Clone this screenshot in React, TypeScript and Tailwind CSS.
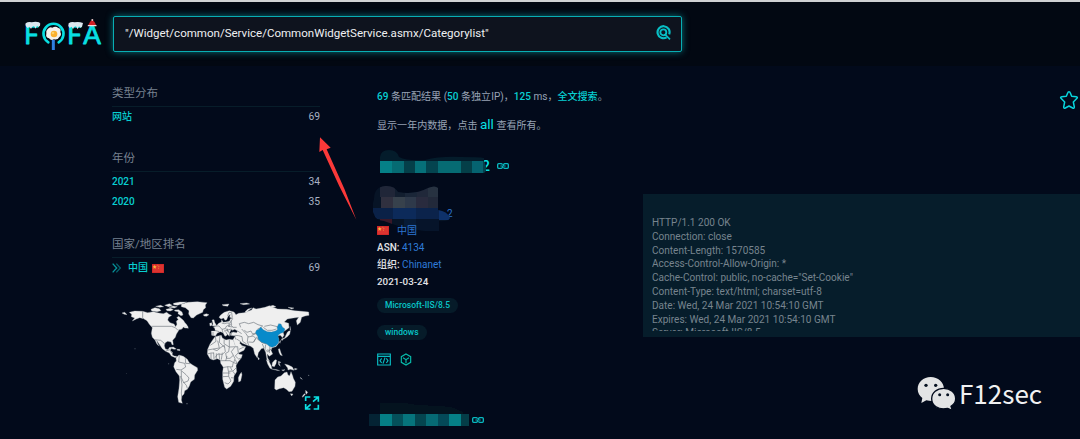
import React from "react";

const Flag = () => (
  <svg width="12" height="9" viewBox="0 0 36 27" className="shrink-0">
    <rect width="36" height="27" fill="#c81f22" />
    <rect x="1.5" y="1.5" width="33" height="24" fill="#dc3430" />
    <path d="M8 3l2 4h4l-3 3 1 4-4-2-4 2 1-4-3-3h4z" fill="#f7b63c" />
    <path d="M16 2h3v3h-3zM19 6h3v3h-3zM18 11h3v3h-3z" fill="#eb7b35" />
  </svg>
);

const LinkIcon = () => (
  <svg width="12" height="8" viewBox="0 0 36 24" fill="none" stroke="#08b9c0" strokeWidth="4" className="shrink-0">
    <path d="M16 8q0-3-3-3H5Q2 5 2 8v8q0 3 3 3h8q3 0 3-3l4-8q0-3 3-3h8q3 0 3 3v8q0 3-3 3h-8q-3 0-3-3" />
    <path d="M10 12h5M21 12h5" strokeWidth="3" />
  </svg>
);

const Logo = () => (
  <svg width="78" height="34" viewBox="72 54 234 102" className="shrink-0">
    <g fill="#08dfe2" stroke="#08dfe2" strokeWidth="2.5" strokeLinejoin="round" fontFamily="Lato, sans-serif" fontSize="83">
      <text x="72" y="131" textLength="45" lengthAdjust="spacingAndGlyphs">F</text>
      <text x="201" y="131" textLength="45" lengthAdjust="spacingAndGlyphs">F</text>
      <text x="250" y="131" textLength="53" lengthAdjust="spacingAndGlyphs">A</text>
    </g>
    <path d="M145 127a30 30 0 1 1 31 0" fill="none" stroke="#08dfe2" strokeWidth="8" strokeLinecap="round" />
    <path d="M160 120v30" stroke="#2f7fe0" strokeWidth="9" />
    <path d="M143 87q7-8 14-4q10-6 18 1q9 2 6 12q5 9-3 15q-5 10-16 7q-9 5-15-3q-11-3-8-14q-2-9 4-14z" fill="#f3f1ee" />
    <circle cx="162" cy="102" r="10" fill="#fbb02e" />
    <circle cx="159" cy="99" r="4" fill="#ffd066" />
    <path d="M77 70q8-6 18-3q12-4 22 0q6 3 3 10l-5 4-4-4-4 9-5-8-6 3-3 6-4-7-6 4-5-5q-3-5-1-9z" fill="#dbe7ef" />
    <path d="M206 70q8-6 18-3q12-3 25 2l-3 11-5 3-4-4-4 9-5-9-6 2-3 7-4-8-6 4-4-6z" fill="#dbe7ef" />
    <path d="M265 75q4-12 12-15q8 4 11 15z" fill="#cf1f24" />
    <path d="M265 77h23" stroke="#f0dede" strokeWidth="4" strokeLinecap="round" />
    <circle cx="277" cy="60" r="3" fill="#e9c9c9" />
  </svg>
);

const northAmerica =
  "M88 97L104 93 128 94 143 98 160 95 176 99 190 101 200 97 207 103 215 106 206 112 203 120 210 128 222 132 227 140 231 133 229 124 235 118 230 113 236 109 243 115 250 121 255 128 261 135 263 143 255 144 250 141 246 147 238 149 233 156 229 163 226 172 218 181 220 194 216 194 213 186 203 184 196 188 193 197 196 207 204 209 208 203 214 203 211 213 217 216 217 225 223 228 231 229 226 233 214 228 208 219 197 214 187 206 178 193 169 180 174 193 178 198 171 193 165 180 157 172 154 160 157 143 148 133 141 122 131 116 119 113 109 117 97 123 104 114 94 110 95 103z";
const southAmerica =
  "M228 233L237 225 250 229 262 238 268 248 278 255 292 263 293 271 284 285 283 298 272 306 268 318 262 328 254 332 252 342 246 348 244 360 247 370 236 367 233 350 237 325 239 300 238 288 228 275 221 260 224 248 229 243z";
const eurasia =
  "M334 153L346 153 344 144 340 141 349 138 356 130 364 126 365 119 370 127 381 125 389 123 391 116 399 115 389 112 391 103 384 109 380 119 375 121 371 114 363 117 357 112 362 105 373 97 388 92 402 96 408 104 416 100 432 98 444 94 455 90 459 83 468 87 480 85 495 82 508 77 520 82 533 87 560 88 585 92 605 94 626 96 627 106 615 108 605 112 601 127 592 135 589 122 596 112 580 114 562 117 553 126 566 130 567 143 557 151 549 155 552 166 547 173 541 166 532 168 536 178 536 190 528 200 516 203 513 211 518 222 508 229 501 221 503 234 509 244 501 239 497 217 491 204 484 206 475 218 472 234 464 222 460 205 452 199 440 195 427 190 421 185 419 190 427 197 437 200 432 211 414 220 404 195 399 179 406 168 391 166 392 159 399 156 410 158 413 153 404 148 398 151 393 149 389 158 388 169 382 162 376 154 382 165 375 169 369 158 361 155 352 159 346 168 335 166z";
const africa =
  "M345 170L358 167 364 166 367 174 378 180 388 178 400 180 405 195 411 205 416 222 427 224 424 234 414 246 408 257 410 275 402 288 401 304 392 319 380 327 374 322 368 298 368 275 370 262 362 250 361 240 352 236 340 240 330 236 322 222 323 208 330 192 338 180z";
const islands =
  "M66 99l8-2 7 7-8-1zM153 88l12-5 13 3 5 6-12 3-16-2zM167 79l15-3 9 4-12 2zM194 76l14-5 9 5-11 4zM198 88l14-3 8 4-9 4-10-1zM220 70l20-4 20 0-13 5-14 5-12-2zM207 82l12-4 13 2-9 4zM224 90l12-1 10 7 3 9-6 2-9-6 1-6-11-2zM253 141l10-3 2 7-9-2zM244 73l20-6 28-2 29 3-5 7 1 8-7 6-2 8-18 8-10 9-7-1-7-11 1-10-11-9-12-3zM310 104l9-3 8 3-7 5-8-1zM208 203l12-2 9 6-7 1zM231 208l8 0 1 4-8-1zM336 120l6-1 2 8 6 10-13 1 2-7zM329 130l6-2 1 8-6 2zM424 277l2 7-4 19-6 3-1-13 4-9zM366 74l21-2-4 7-13-2zM420 71l20-2 9 3-18 2zM435 95l9-8 12-3-12 8-3 5zM509 79l10-3 9 4-11 2zM564 82l18 2-7 3zM570 139l2 13-2-3zM562 157l5-5 4 2-2 9-7 7-7 5-6 3-3 4-2-5 10-4zM540 190l2-9-4 5zM535 207l4-1 4 13 4 8-6-2-4-8zM517 248l8-9 5 1-2 11-5 9-7-2zM499 239l7 3 8 16 2 9-6-2-7-13zM515 267l16 2 8 3-9-1zM535 244l8 3-6 1 4 11-5-5zM545 270l10-1-5 3zM554 252l11 3 12 6 5 10-11-3-7 2-1-6zM475 232l3 4-2 4-2-4zM584 265l8 2-8 3zM601 292l6 6-4-2zM571 341l8 1-4 6zM617 331l6 6-4 6-2-4zM616 343l-8 9-1-3 6-8z";
const australia = "M525 300l8-9 10-3 10-10 8-2 3 9 5 2 4-12 5 12 2 8 6 12-1 12-9 15-9 1-8-7-8-5-13 3-9 4-5-4z";

const WorldMap = () => (
  <svg width="210" height="120" viewBox="36 51 630 360">
    <defs>
      <clipPath id="mainland"><path d={northAmerica} /><path d={southAmerica} /><path d={eurasia} /><path d={africa} /></clipPath>
    </defs>
    <g fill="#efefef" stroke="#b9bec3" strokeWidth="1" strokeLinejoin="round">
      <path d={northAmerica} /><path d={southAmerica} /><path d={eurasia} /><path d={africa} /><path d={islands} /><path d={australia} />
    </g>
    <g fill="none" stroke="#6f777f" strokeWidth="2" strokeLinejoin="round" clipPath="url(#mainland)">
      <path d="M128 92v21l14 14M154 139h61l11 4 8 8 17-5M164 179l18 2 10 8 4 9M197 213l14-4 4 10M238 225l-2 21 18 4 3 11-14 9-14-2M256 235l1 15 14 1M244 272l14 12 9 10-3 9-13 5-7-15zM250 306l9 10 3 9M242 288l4 27-2 24 2 22" />
      <path d="M346 168l2 16-17 12M360 166l-2 21 16 15M373 173l-1 18 16 10M388 178v23l25-1M353 182l5 22-36 6M340 208l11 4 12-10 10-6 3 19-9 8-14-1-8 11M388 201l-2 14-9 5 3 15 10 0 10-9-6-11 10-13M413 200l2 18-9 10 10 9 12-4M400 226l5 10-4 12 12 4 14-1M333 220v18M341 218l1 20M349 220v20M357 220l2 18M367 218l-3 21M361 242l14 0 15 0 10 5-3 14-13-1-17 3M383 260l2 14 14-1 9-9 5 4M386 274v15l-18 1M386 289l7 14-9 9-10-4M399 274l7 11-3 9-10-1M406 239l7 16-3 15M391 262l5 9M381 228l-4 15M322 222l11-3 9 0M410 253v16M368 279h23" />
      <path d="M344 151l14 4M346 138l11 0 9 10 9-2 5-8 12-4 7 8 11 0M366 148l3 11M376 146l8 4 9-3 9 7-7 3-2 9M365 129l8 2 8-2 10 1M383 108l4-11 8 1 2 15M398 116l-8 13M384 139l14 2M372 153l11-2 5 8M387 131l1 9M393 122l2 13M382 146l1 9M339 156l0 10M422 142l-4-11 15-4 13 4 15-4 13 7 14 4-7 6-8 3M433 151l8 6 12-4 4 8 14 0M425 147l12 13 7 10M405 166l11 1 10 3 2 14 12 8M410 177l12 8 5 14M444 169l-2 16 5 13M444 171l16-3 7 7-7 12-15-1M461 186l9-14 10 9 9 9M472 177l13 10 15 5M497 194l-2 14 8 8 10-9M487 192l5 12M510 199l-2 20M493 139l19-4 20 5 9-3M490 142l12 9 14 0 13-4M413 153l12 8M455 166l12-5M403 166l5 13M417 208l17-8M501 210l8 1M534 173l12-4" />
    </g>
    <path d="M466 158L470 150 477 148 482 141 490 149 502 155 515 156 528 152 533 148 531 143 536 131 543 132 547 141 555 147 551 157 542 160 534 166 537 179 535 189 527 198 516 202 508 199 500 192 485 187 475 178 473 169z" fill="#078aca" stroke="#4b7894" />
    <g fill="#68717b"><circle cx="105" cy="206" r="1.500" /><circle cx="80" cy="280" r="1" /><circle cx="206" cy="251" r="1.500" /><circle cx="603" cy="295" r="1.500" /><circle cx="626" cy="286" r="2" /><circle cx="261" cy="371" r="2" /></g>
    <g fill="none" stroke="#0ce0e4" strokeWidth="5">
      <path d="M617 363v-12h14M641 351h14v14M653 353l-14 12M617 372v15h14M619 385l13-12M655 374v13h-14" />
    </g>
  </svg>
);

const TitleMosaic = () => (
  <svg width="113" height="24" viewBox="0 0 113 24" className="shrink-0">
    <text x="104.5" y="20.5" fill="#08dfe2" fontFamily="Roboto, sans-serif" fontSize="15" fontWeight="500">2</text>
    <path d="M3 13V7q1-7 9-7t10 7q8 4 26 3q15-4 36-3 18 0 23 1v13H3z" fill="#041c2b" />
    <g shapeRendering="crispEdges">
      <path fill="#058087" d="M3 11h12v12H3z" /><path fill="#066b73" d="M15 11h12v12H15z" /><path fill="#043f49" d="M27 11h11v12H27z" />
      <path fill="#067079" d="M38 11h11v12H38z" /><path fill="#04444f" d="M49 11h12v12H49z" /><path fill="#066b73" d="M61 11h23v12H61z" />
      <path fill="#043f48" d="M84 11h11v12H84z" /><path fill="#056370" d="M95 11h11v12H95z" />
    </g>
    <path d="M106 11h1l2 5v5l-2 2h-1z" fill="#04404c" />
  </svg>
);

const AddressMosaic = () => (
  <svg width="82" height="48" viewBox="0 0 82 48" className="absolute -top-[38px] -left-[4px]">
    <defs><clipPath id="smudge"><path d="M1 15Q1 3 12 2q9-1 13 6 17 3 30-4 7-3 10 0v22q9 1 12 8-2 4-11 3v10l-14 0-13-2-14-3-14-5Q2 36 1 30-2 25 1 15z" /></clipPath></defs>
    <g clipPath="url(#smudge)" shapeRendering="crispEdges">
      <path fill="#071426" d="M0 0h82v48H0z" />
      <path fill="#202638" d="M7 0h15v13H7z" /><path fill="#121e2f" d="M22 0h10v13H22z" /><path fill="#1a2638" d="M32 0h12v13H32z" /><path fill="#20283a" d="M44 0h11v13H44z" /><path fill="#273241" d="M55 0h11v13H55z" />
      <path fill="#30303f" d="M8 13h12v11H8z" /><path fill="#37414c" d="M20 13h12v11H20z" /><path fill="#2e394a" d="M32 13h11v11H32z" /><path fill="#292b3e" d="M43 13h12v11H43z" /><path fill="#22293a" d="M55 13h11v11H55z" />
      <path fill="#0a2147" d="M0 24h20v11H0z" /><path fill="#0c2a5a" d="M20 24h23v11H20z" /><path fill="#0b234b" d="M43 24h23v11H43z" /><path fill="#0e316a" d="M66 24h14v12H66z" />
      <path fill="#3a1828" d="M7 35h12v6H7z" /><path fill="#071b36" d="M31 35h12v12H31z" /><path fill="#06142a" d="M43 35h23v12H43z" />
    </g>
  </svg>
);

const NextMosaic = () => (
  <svg width="101" height="24" viewBox="0 0 101 24" className="shrink-0" shapeRendering="crispEdges">
    <path d="M11 1h25l12 2 22 1 12 1 12 5v3H11z" fill="#04131f" />
    <path fill="#042334" d="M0 12h11v12H0z" /><path fill="#057f86" d="M11 12h12v12H11z" /><path fill="#04505a" d="M23 12h11v12H23z" /><path fill="#06747c" d="M34 12h12v12H34z" />
    <path fill="#04454f" d="M46 12h11v12H46z" /><path fill="#066a74" d="M57 12h12v12H57z" /><path fill="#044958" d="M69 12h11v12H69z" /><path fill="#058087" d="M80 12h12v12H80z" /><path fill="#043d48" d="M92 12h8v12H92z" />
  </svg>
);

function Facet({ title, children }: { title: string; children: React.ReactNode }) {
  return (
    <section>
      <h2 className="flex h-7 items-center border-b border-[#071d2a] pt-[2px] text-[11.5px] text-[#778190]">{title}</h2>
      {children}
    </section>
  );
}

function Row({ count, children }: { count: number; children: React.ReactNode }) {
  return (
    <div className="flex h-5 items-center justify-between text-[10px] leading-none">
      <span className="flex items-center font-medium text-[#08cfd2]">{children}</span>
      <span className="text-[10.3px] text-[#a9b2c3]">{count}</span>
    </div>
  );
}

const response = `HTTP/1.1 200 OK
Connection: close
Content-Length: 1570585
Access-Control-Allow-Origin: *
Cache-Control: public, no-cache="Set-Cookie"
Content-Type: text/html; charset=utf-8
Date: Wed, 24 Mar 2021 10:54:10 GMT
Expires: Wed, 24 Mar 2021 10:54:10 GMT
Server: Microsoft-IIS/8.5`;

export default function App() {
  return (
    <div className="relative h-[439px] w-[1080px] overflow-hidden bg-[#020a1b] font-[Roboto,'Noto_Sans_CJK_SC',sans-serif]">
      <header className="flex h-[66px] items-start border-t-2 border-[#cfd1d3] bg-[#020812] pl-6">
        <div className="mt-4 w-[89px]"><Logo /></div>
        <div className="mt-[14px] flex h-9 w-[569px] items-center justify-between rounded-[2px] border border-[#08aeb4] bg-[#0e131e] pr-[10px] pl-[11px] shadow-[0_0_7px_#087078]">
          <span className="text-[11.54px] whitespace-nowrap text-[#eef0f2]">"/Widget/common/Service/CommonWidgetService.asmx/Categorylist"</span>
          <svg width="15" height="15" viewBox="0 0 45 45" fill="none" stroke="#08bfc5" strokeWidth="6.5" className="-mt-1">
            <path d="M32 37a18 18 0 1 1 7.500-9" /><circle cx="22" cy="22" r="9" strokeWidth="5.500" /><path d="M26 27l16 16" strokeWidth="5" />
          </svg>
        </div>
      </header>

      <div className="flex">
        <aside className="ml-28 flex w-[208px] shrink-0 flex-col pt-[13px]">
          <Facet title="类型分布"><Row count={69}>网站</Row></Facet>
          <div className="mt-[17px]"><Facet title="年份"><Row count={34}>2021</Row><Row count={35}>2020</Row></Facet></div>
          <div className="mt-[18px]">
            <Facet title="国家/地区排名">
              <Row count={69}>
                <svg width="10" height="10" viewBox="0 0 30 30" fill="none" strokeWidth="4" className="mr-[6px]"><path d="M2 2l12 13L2 28" stroke="#07949c" /><path d="M13 2l12 13-12 13" stroke="#06636d" /></svg>
                中国<span className="ml-1 pt-px"><Flag /></span>
              </Row>
            </Facet>
          </div>
          <div className="mt-[19px] w-[210px]"><WorldMap /></div>
        </aside>

        <main className="ml-[57px] flex w-[703px] shrink-0 flex-col pt-[22px]">
          <div className="flex h-[62px] justify-between">
            <div className="text-[10.05px] text-[#98a3b5]">
              <p className="h-[29px] leading-[17px]">
                <b className="font-medium text-[#08cfd2]">69</b> 条匹配结果 (<b className="font-medium text-[#08cfd2]">50</b> 条独立IP)，<b className="font-medium text-[#08cfd2]">125</b> ms，<b className="font-medium text-[#08cfd2]">全文搜索</b>。
              </p>
              <p className="leading-[17px]">显示一年内数据，点击 <b className="text-[13.5px] leading-none font-normal text-[#08dfe2]">all</b> 查看所有。</p>
            </div>
            <svg width="20" height="20" viewBox="0 0 60 60" className="mt-[2px] mr-[1px]" fill="none" stroke="#08d5dc" strokeWidth="4.500" strokeLinejoin="round">
              <path d="M30 5q3 0 4 4l4 10 14 1q5 1 2 5L43 36l3 15q0 5-5 3l-11-6-11 6q-5 2-5-3l3-15L6 25q-3-4 2-5l14-1 4-10q1-4 4-4z" />
            </svg>
          </div>
          <article className="flex">
            <div className="flex w-[266px] shrink-0 flex-col">
              <div className="flex h-6 items-center gap-[7px]"><TitleMosaic /><span className="pt-2"><LinkIcon /></span></div>
              <div className="mt-8 h-4 pl-[70px] text-[10px] leading-4 text-[#2c75cf]">2</div>
              <div className="relative flex h-[17px] items-center text-[10px] text-[#2c75cf]">
                <AddressMosaic /><span className="relative"><Flag /></span><span className="relative ml-2">中国</span>
              </div>
              <p className="h-[17px] text-[10px] leading-[17px] text-[#2f7bd8]"><b className="font-medium text-[#e2e4e8]">ASN:</b> 4134</p>
              <p className="h-[17px] text-[10px] leading-[17px] text-[#2f7bd8]"><b className="font-medium text-[#e2e4e8]">组织:</b> Chinanet</p>
              <p className="h-[17px] text-[9.8px] leading-[17px] font-medium text-[#e2e4e8]">2021-03-24</p>
              <div className="mt-2 flex flex-col items-start gap-3 text-[8.5px] font-medium text-[#08c5c8]">
                <span className="rounded-full bg-[#061b29] px-2 leading-[15px]">Microsoft-IIS/8.5</span>
                <span className="rounded-full bg-[#061b29] px-2 leading-[15px]">windows</span>
              </div>
              <div className="mt-[13px] flex items-center gap-[9px]">
                <svg width="14" height="13" viewBox="0 0 42 39" fill="none" stroke="#08bbc1" strokeWidth="3.500"><path d="M2 3h38v33H2zM2 10h38M14 16l-5 7 5 7M28 16l5 7-5 7M24 14l-6 18" /></svg>
                <svg width="12" height="13" viewBox="0 0 36 39" fill="none" stroke="#08bbaa" strokeWidth="3.500"><path d="M18 3l14 8v17l-14 8-14-8V11zM9 14l9 6 9-6M18 20v11" /></svg>
              </div>
              <div className="-ml-2 mt-[36px] flex h-6 items-center gap-[2px]"><NextMosaic /><span className="pt-3"><LinkIcon /></span></div>
            </div>
            <div className="mt-[44px] h-[143px] w-[437px] bg-[#061d2b] pt-[22px] pl-[9px]">
              <pre className="h-[115px] overflow-hidden font-[Roboto,sans-serif] text-[10.05px] leading-[13.8px] text-[#77848e]">{response}</pre>
            </div>
          </article>
        </main>
      </div>

      <svg width="38" height="84" viewBox="0 0 114 252" className="absolute top-[137px] left-[319px]">
        <path d="M3 1l32 31-12 5 53 118 36 93L61 148 11 39 1 45z" fill="#fb3939" />
      </svg>

      <div className="absolute top-[374px] left-[917px] flex items-center text-[#f0f1f2]">
        <svg width="39" height="35" viewBox="51 42 117 105">
          <path d="M92 45c-22 0-39 15-39 36 0 12 6 21 14 27l-3 15 15-8c36 8 53-10 53-34 0-21-18-36-40-36z" fill="#e3e4e5" />
          <path d="M131 79c-20 0-36 13-36 31 0 20 19 35 48 29l14 6-4-12c9-6 14-14 14-23 0-18-16-31-36-31z" fill="#e3e4e5" stroke="#020a1b" strokeWidth="4" />
          <g fill="#071222"><circle cx="78" cy="70" r="5" /><circle cx="107" cy="70" r="5" /><circle cx="119" cy="98" r="4.500" /><circle cx="143" cy="98" r="4.500" /></g>
        </svg>
        <span className="ml-[3px] font-['Noto_Sans_CJK_SC',sans-serif] text-[26px] leading-[38px] font-normal">F12sec</span>
      </div>
    </div>
  );
}
